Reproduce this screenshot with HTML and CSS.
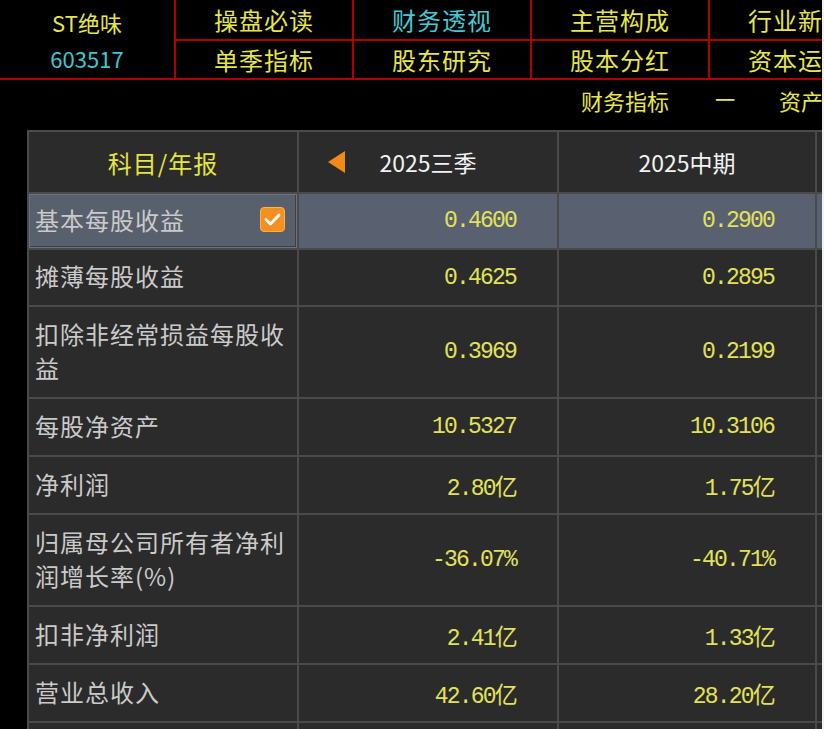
FILE: index.html
```html
<!DOCTYPE html>
<html lang="zh-CN">
<head>
<meta charset="utf-8">
<title>ST绝味 财务透视</title>
<link rel="stylesheet" href="styles.css">
</head>
<body>
<div class="screen">
  <nav class="tabs">
    <div class="stock"><span class="name">ST绝味</span><span class="code">603517</span></div>
    <div class="tab">操盘必读</div>
    <div class="tab active">财务透视</div>
    <div class="tab">主营构成</div>
    <div class="tab">行业新闻</div>
    <div class="tab">单季指标</div>
    <div class="tab">股东研究</div>
    <div class="tab">股本分红</div>
    <div class="tab">资本运作</div>
  </nav>

  <div class="toolbar">
    <span>财务指标</span>
    <span class="sep">一</span>
    <span>资产负债表</span>
  </div>

  <div class="table-wrap">
    <div class="grid">
      <div class="cell head subject">科目/年报</div>
      <div class="cell head period">
        <svg class="arrow" width="17" height="24" viewBox="0 0 17 24"><polygon points="0,12 17,1 17,23" fill="#f28a17"/></svg>
        2025三季
      </div>
      <div class="cell head period">2025中期</div>
      <div class="cell head period">2025一季</div>

      <div class="cell label hl selected">基本每股收益
        <svg class="check" width="25" height="25" viewBox="0 0 25 25"><rect x="0.5" y="0.5" width="24" height="24" rx="3.5" fill="#f3901f" stroke="#ffb04a"/><path d="M6 12.5 L10.5 17 L19 8" fill="none" stroke="#fff" stroke-width="2.8" stroke-linecap="round" stroke-linejoin="round"/></svg>
      </div>
      <div class="cell value hl">0.4600</div>
      <div class="cell value hl">0.2900</div>
      <div class="cell value hl">0.1400</div>

      <div class="cell label">摊薄每股收益</div>
      <div class="cell value">0.4625</div>
      <div class="cell value">0.2895</div>
      <div class="cell value">0.1400</div>

      <div class="cell label">扣除非经常损益每股收益</div>
      <div class="cell value">0.3969</div>
      <div class="cell value">0.2199</div>
      <div class="cell value">0.1000</div>

      <div class="cell label">每股净资产</div>
      <div class="cell value">10.5327</div>
      <div class="cell value">10.3106</div>
      <div class="cell value">10.2000</div>

      <div class="cell label">净利润</div>
      <div class="cell value">2.80亿</div>
      <div class="cell value">1.75亿</div>
      <div class="cell value">0.80亿</div>

      <div class="cell label">归属母公司所有者净利润增长率(%)</div>
      <div class="cell value">-36.07%</div>
      <div class="cell value">-40.71%</div>
      <div class="cell value">-40.00%</div>

      <div class="cell label">扣非净利润</div>
      <div class="cell value">2.41亿</div>
      <div class="cell value">1.33亿</div>
      <div class="cell value">0.60亿</div>

      <div class="cell label">营业总收入</div>
      <div class="cell value">42.60亿</div>
      <div class="cell value">28.20亿</div>
      <div class="cell value">14.00亿</div>

      <div class="cell label">营业总收入增长率(%)</div>
      <div class="cell value"></div>
      <div class="cell value"></div>
      <div class="cell value"></div>
    </div>
  </div>
</div>
</body>
</html>
```

FILE: styles.css
```css
html, body {
  margin: 0;
  padding: 0;
  background: #f2f2f2;
}

.screen {
  width: 822px;
  height: 729px;
  background: #000;
  overflow: hidden;
  font-family: "Noto Sans CJK SC", "Noto Sans", sans-serif;
}

/* ---------- top tabs ---------- */
.tabs {
  display: grid;
  grid-template-columns: 174px 176px 176px 176px 176px;
  grid-template-rows: 39px 37px;
  gap: 2px;
  padding-bottom: 2px;
  background: #b00000;
  width: 822px;
  overflow: hidden;
}

.stock {
  grid-row: 1 / span 2;
  background: #000;
  display: flex;
  flex-direction: column;
}

.stock .name,
.stock .code {
  display: flex;
  align-items: center;
  justify-content: center;
  font-size: 22px;
}

.stock .name {
  color: #e6e64c;
  padding-top: 3px;
  height: 37px;
}

.stock .code {
  color: #3fc6cf;
  height: 36px;
}

.tab {
  background: #000;
  color: #e6e64c;
  font-size: 24px;
  letter-spacing: 1px;
  display: flex;
  align-items: center;
  justify-content: center;
  white-space: nowrap;
  line-height: 1;
}

.tab.active {
  color: #45c9d3;
}

/* ---------- toolbar ---------- */
.toolbar {
  height: 50px;
  box-sizing: border-box;
  padding-bottom: 10px;
  display: flex;
  align-items: center;
  gap: 44px;
  padding-left: 581px;
  color: #e6e64c;
  font-size: 22px;
  line-height: 1;
  white-space: nowrap;
  overflow: hidden;
}

.toolbar .sep {
  font-size: 20px;
  margin-left: 2px;
}

/* ---------- table ---------- */
.table-wrap {
  margin-left: 27px;
  width: 795px;
  overflow: hidden;
}

.grid {
  display: grid;
  grid-template-columns: 268px 258px 256px 260px;
  grid-template-rows: 60px 54px 55px 90px 56px 56px 90px 56px 56px 56px;
  gap: 2px;
  padding: 2px 0 0 2px;
  background: #4a4a4a;
  width: 1052px;
}

.cell {
  background: #2b2b2b;
  display: flex;
  align-items: center;
  box-sizing: border-box;
}

.head {
  justify-content: center;
  font-size: 24px;
  letter-spacing: 1px;
}

.head.subject {
  color: #e4e442;
}

.head.period {
  color: #f2f2f2;
  font-size: 23px;
  letter-spacing: 0;
  position: relative;
}

.arrow {
  position: absolute;
  left: 29px;
  top: 18px;
}

.label {
  color: #cacaca;
  font-size: 24px;
  letter-spacing: 1px;
  line-height: 34px;
  padding-left: 6px;
  padding-right: 4px;
  padding-bottom: 3px;
  position: relative;
}

.value {
  justify-content: flex-end;
  padding-right: 41px;
  color: #e2e25a;
  font-family: "Liberation Mono", "Noto Sans CJK SC", monospace;
  font-size: 23px;
  letter-spacing: -1.8px;
}

.hl {
  background: #596070;
}

.selected {
  background: #58606d;
  box-shadow: inset 0 0 0 1px #6d737e, inset -2px -2px 0 0 #3b3f47;
}

.check {
  position: absolute;
  right: 12px;
  top: 13px;
}
```
